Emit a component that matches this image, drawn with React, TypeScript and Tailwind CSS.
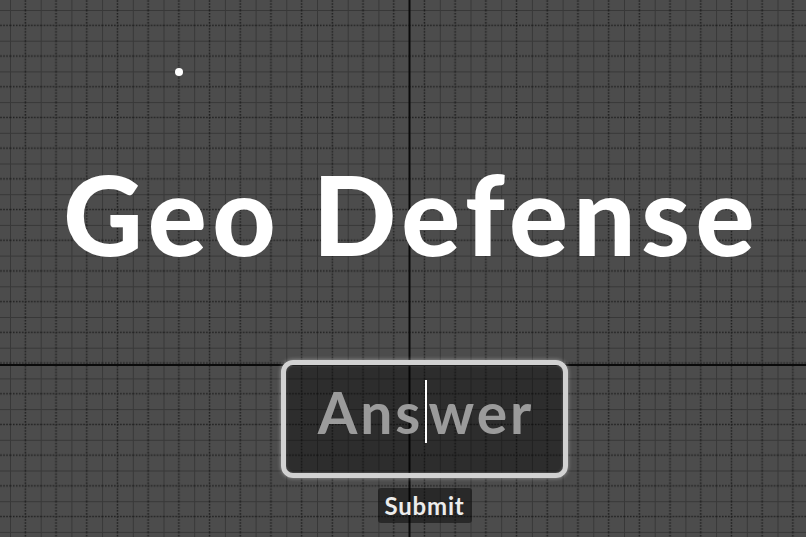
import React from 'react';

// Canvas grid: solid minor lines with dotted lines halfway between them
function GridBackdrop() {
    const step = 30.7;
    return (
        <svg className="absolute inset-0" width={806} height={537} viewBox="0 0 806 537">
            <defs>
                <pattern id="grid" x={10} y={10} width={step} height={step} patternUnits="userSpaceOnUse">
                    <line x1={0} y1={0} x2={0} y2={step} stroke="#383838" strokeWidth={2} />
                    <line x1={0} y1={0} x2={step} y2={0} stroke="#383838" strokeWidth={2} />
                    <line x1={step / 2} y1={0} x2={step / 2} y2={step} stroke="#1e1e1e" strokeWidth={1.5} strokeDasharray="1.5 1.5" />
                    <line x1={0} y1={step / 2} x2={step} y2={step / 2} stroke="#1e1e1e" strokeWidth={1.5} strokeDasharray="1.5 1.5" />
                </pattern>
            </defs>
            <rect width={806} height={537} fill="url(#grid)" />
            {/* axes */}
            <line x1={409.5} y1={0} x2={409.5} y2={537} stroke="#0a0a0a" strokeWidth={2} />
            <line x1={0} y1={365} x2={806} y2={365} stroke="#0a0a0a" strokeWidth={2} />
            {/* player marker */}
            <circle cx={179} cy={72} r={4} fill="#ffffff" />
        </svg>
    );
}

export default function App() {
    return (
        <div className="relative w-[806px] h-[537px] overflow-hidden bg-[#4c4c4c] font-['Lato','Liberation_Sans',sans-serif]">
            <GridBackdrop />

            <div className="relative flex flex-col items-center pt-[158px]">
                <h1 className="ml-[17px] text-[110px] leading-none font-black tracking-[5.5px] text-white whitespace-nowrap">
                    Geo Defense
                </h1>

                <div className="ml-[43px] mt-[92px] flex flex-col items-center">
                    {/* answer input */}
                    <div className="w-[287px] h-[118px] rounded-[12px] border-[5px] border-[#d2d2d2] bg-black/40 shadow-[0_0_4px_rgba(255,255,255,0.45),inset_0_0_3px_rgba(255,255,255,0.3)] flex justify-center pt-[19px]">
                        <div className="flex items-start text-[57px] leading-none font-bold tracking-[3px] text-[#9b9b9b]">
                            <span>Ans</span>
                            <span className="w-[2px] h-[63px] -mt-[4px] ml-[2px] mr-[1px] bg-white" />
                            <span className="-mr-[3px]">wer</span>
                        </div>
                    </div>

                    <button
                        type="button"
                        className="mt-[10px] w-[94px] h-[35px] rounded-[3px] bg-black/45 text-[24px] leading-none font-bold tracking-[0.8px] text-[#ececec]"
                    >
                        Submit
                    </button>
                </div>
            </div>
        </div>
    );
}
